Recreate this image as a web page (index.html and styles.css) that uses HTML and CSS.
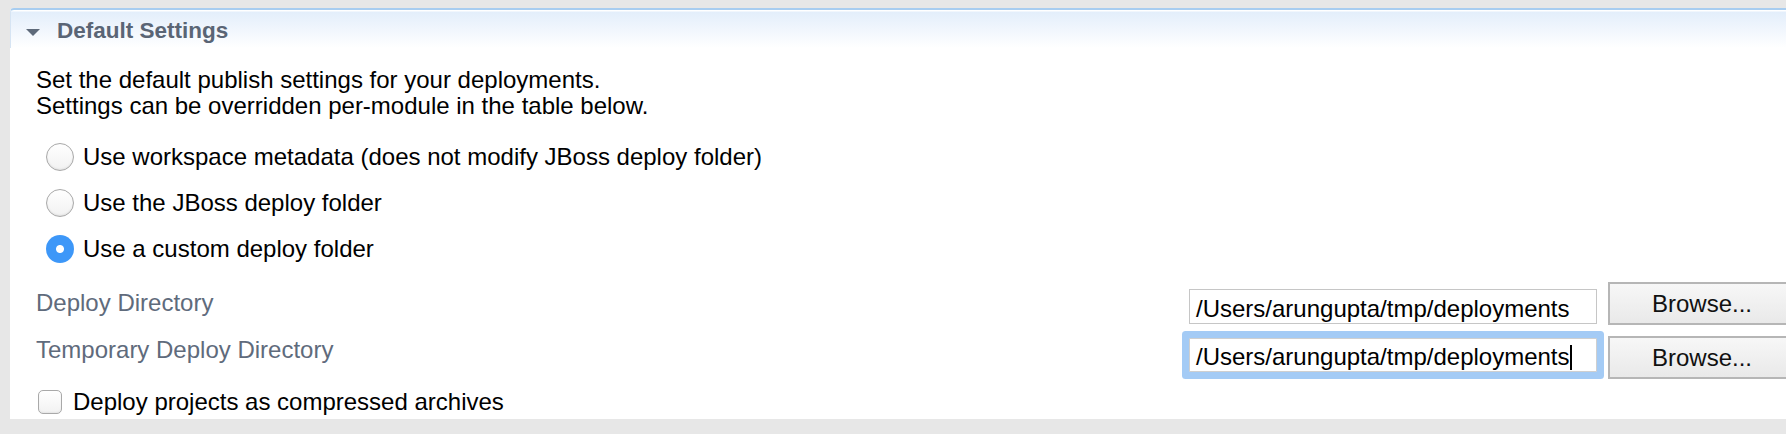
FILE: index.html
```html
<!DOCTYPE html>
<html>
<head>
<meta charset="utf-8">
<link rel="stylesheet" href="styles.css">
</head>
<body>
<section class="panel">
  <header class="panel-header">
    <svg class="twisty" width="14" height="7" viewBox="0 0 14 7"><path d="M0 0 H14 L7 7 Z" fill="#5e6a7a"/></svg>
    <span class="panel-title">Default Settings</span>
  </header>
  <div class="panel-body">
    <p class="intro">Set the default publish settings for your deployments.<br>Settings can be overridden per-module in the table below.</p>
    <div class="radios">
      <div class="radio-row"><span class="radio"></span><span class="opt">Use workspace metadata (does not modify JBoss deploy folder)</span></div>
      <div class="radio-row"><span class="radio"></span><span class="opt">Use the JBoss deploy folder</span></div>
      <div class="radio-row"><span class="radio checked"></span><span class="opt">Use a custom deploy folder</span></div>
    </div>
    <div class="field-row row-one">
      <span class="label">Deploy Directory</span>
      <div class="field">/Users/arungupta/tmp/deployments</div>
      <div class="button">Browse...</div>
    </div>
    <div class="field-row row-two">
      <span class="label">Temporary Deploy Directory</span>
      <div class="field focused">/Users/arungupta/tmp/deployments<span class="caret"></span></div>
      <div class="button">Browse...</div>
    </div>
    <div class="check-row"><span class="checkbox"></span><span class="opt">Deploy projects as compressed archives</span></div>
  </div>
</section>
</body>
</html>
```

FILE: styles.css
```css
html, body {
  margin: 0;
  overflow: hidden;
}
body {
  background: #e7e7e7;
  padding: 8px 0 0 10px;
  font-family: "Liberation Sans", Arial, sans-serif;
  color: #000;
}
.panel {
  width: 1800px;
  box-sizing: border-box;
  background: #fff;
  border-top-left-radius: 4px;
}
.panel-header {
  display: flex;
  align-items: center;
  height: 40px;
  box-sizing: border-box;
  border-top: 2px solid #a8cdf0;
  border-left: 1px solid #d6e4f3;
  border-top-left-radius: 4px;
  padding: 5px 0 1px 15px;
  background: linear-gradient(#ffffff 0, #ffffff 1px, #e3eefb 2px, #ffffff 38px);
}
.twisty {
  margin-top: 3px;
}
.panel-title {
  margin-left: 17px;
  font-size: 22.5px;
  font-weight: bold;
  color: #5a6575;
  line-height: 28px;
}
.panel-body {
  padding: 19px 14px 5px 26px;
}
.intro {
  margin: 0;
  font-size: 24px;
  line-height: 26px;
}
.radios {
  margin-top: 24px;
  display: flex;
  flex-direction: column;
  gap: 18px;
}
.radio-row {
  display: flex;
  align-items: center;
  height: 28px;
  padding-left: 10px;
}
.opt {
  font-size: 24px;
  line-height: 28px;
}
.radio {
  width: 28px;
  height: 28px;
  box-sizing: border-box;
  border-radius: 50%;
  border: 1px solid #a9a9a9;
  background: linear-gradient(#ffffff, #f2f2f2);
  box-shadow: inset 0 -1px 2px rgba(0,0,0,0.08);
  margin-right: 9px;
  flex: none;
}
.radio.checked {
  border: none;
  box-shadow: none;
  background: radial-gradient(circle, #ffffff 0, #ffffff 3.5px, #3d97f8 4.5px);
}
.field-row {
  display: flex;
  align-items: flex-start;
}
.row-one {
  margin-top: 19px;
}
.row-two {
  margin-top: 11px;
}
.label {
  flex: 1;
  font-size: 24px;
  line-height: 26px;
  color: #5f6b7c;
}
.row-one .label { margin-top: 8px; }
.row-two .label { margin-top: 1px; }
.field {
  width: 408px;
  height: 35px;
  box-sizing: border-box;
  border: 1px solid #c6c6c6;
  padding: 3px 6px 0;
  font-size: 24px;
  line-height: 31px;
  white-space: nowrap;
  background: #fff;
}
.row-one .field { margin-top: 7px; }
.row-two .field {
  margin-top: 2px;
  height: 34px;
  padding-top: 2px;
  border-color: #cfcfcf;
  box-shadow: 0 0 0 7px #a4cbf5;
  border-radius: 1px;
}
.caret {
  display: inline-block;
  width: 2px;
  height: 25px;
  background: #000;
  vertical-align: -5px;
}
.button {
  width: 188px;
  height: 43px;
  box-sizing: border-box;
  margin-left: 11px;
  border: 2px solid #b6b6b6;
  background: linear-gradient(#f7f7f7, #e9e9e9);
  font-size: 24px;
  line-height: 39px;
  text-align: center;
  color: #111;
}
.check-row {
  display: flex;
  align-items: center;
  margin-top: 11px;
  height: 24px;
  padding-left: 2px;
}
.checkbox {
  width: 24px;
  height: 24px;
  box-sizing: border-box;
  border: 1px solid #a9a9a9;
  border-radius: 5px;
  background: linear-gradient(#ffffff, #f2f2f2);
  box-shadow: inset 0 -1px 2px rgba(0,0,0,0.06);
  margin-right: 11px;
  flex: none;
}
```
